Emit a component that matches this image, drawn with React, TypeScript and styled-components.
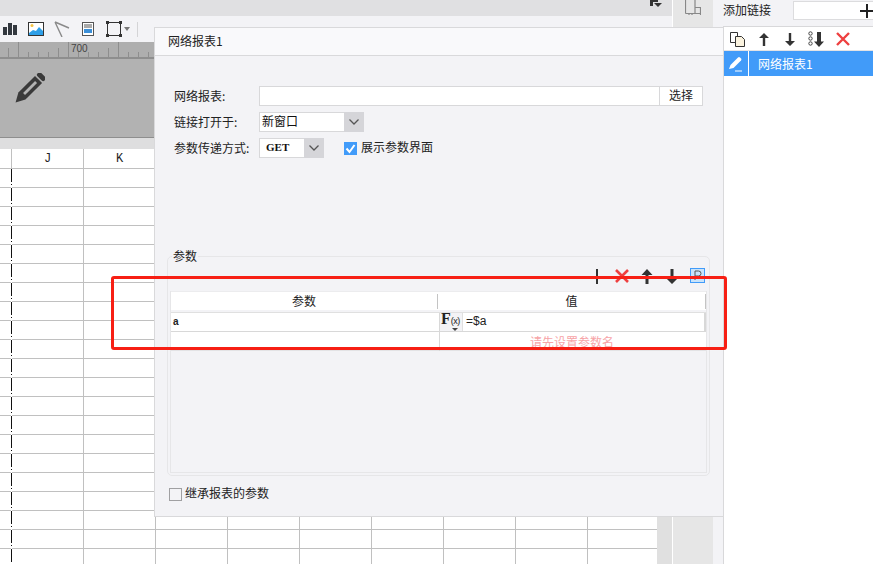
import React from "react";
import styled, { createGlobalStyle } from "styled-components";

const Global = createGlobalStyle`
  html, body { margin: 0; padding: 0; background: #fff; }
  * { box-sizing: border-box; }
  body { font-family: "Noto Sans CJK SC", "Liberation Sans", sans-serif; font-size: 12px; color: #222; }
`;

const Shell = styled.div`
  position: relative; width: 873px; height: 564px; overflow: hidden; display: flex; background: #fff;
`;
const MainColumn = styled.div`width: 657px; display: flex; flex-direction: column; flex: none; z-index: 1;`;
const TopBar = styled.div`
  height: 16px; background: #e0e0e2; display: flex; justify-content: flex-end; flex: none;
`;
const TopIcon = styled.svg`margin-right: -5px; display: block; flex: none;`;
const Toolbar = styled.div`height: 26px; background: #f3f3f6; flex: none; display: flex; align-items: center; padding-left: 3px;`;
const ToolIcon = styled.svg<{ $gap?: number }>`flex: none; margin-right: ${p => p.$gap ?? 0}px; display: block;`;
const ToolSep = styled.div`width: 1px; height: 15px; background: #d4d4d6; margin-left: 7px;`;
const Ruler = styled.div`height: 17px; background: #aeaeae; border-bottom: 2px solid #8e8e8e; flex: none; overflow: hidden;`;
const RulerSvg = styled.svg`display: block;`;
const RulerLabel = styled.text`font-family: "Liberation Sans", sans-serif; font-size: 10px; fill: #444;`;
const Stage = styled.div`height: 79px; background: #b2b2b2; border-bottom: 1px solid #8e8e8e; padding: 14px 13px; flex: none;`;
const Strip = styled.div`height: 11px; background: #dededf; flex: none;`;
const Sheet = styled.div`flex: 1; overflow: hidden; background: #fff;`;
const SheetRow = styled.div<{ $head?: boolean }>`display: flex; height: ${p => (p.$head ? 20 : 19)}px; border-bottom: 1px solid #c0c0c0;`;
const SheetLead = styled.div`width: 12px; flex: none; border-right: 1px solid #c0c0c0;`;
const SheetLeadDashed = styled.div`
  width: 12px; flex: none; margin-bottom: -1px;
  background: repeating-linear-gradient(#111 0 13px, #fff 13px 15px, #111 15px 16px, #fff 16px 19px) right / 1px 100% no-repeat;
`;
const SheetCell = styled.div<{ $last?: boolean }>`
  width: ${p => (p.$last ? 69 : 72)}px; flex: none; border-right: ${p => (p.$last ? "none" : "1px solid #c0c0c0")};
  text-align: center; line-height: 20px; font-family: "Liberation Mono", monospace; font-size: 12px; color: #222;
`;
const RailA = styled.div`width: 16px; background: #e0e0e0; border-right: 1px solid #fff; flex: none; display: flex; flex-direction: column;`;
const RailCapTop = styled.div`height: 16px; background: #e0e0e2;`;
const RailCapLow = styled.div`height: 11px; background: #f3f3f6;`;
const RailB = styled.div`width: 40px; background: #e6e6e6; flex: none; display: flex; justify-content: center; align-items: flex-start;`;
const RailC = styled.div`width: 10px; background: #f3f3f6; flex: none;`;

const RightPanel = styled.div`flex: 1; display: flex; flex-direction: column;`;
const RightHead = styled.div`height: 27px; background: #f3f3f6; display: flex; align-items: flex-start; padding: 1px 0 0 0; border-bottom: 1px solid #d8d8da;`;
const RightTitle = styled.div`width: 70px; height: 18px; line-height: 17px; color: #222;`;
const RightInput = styled.div`
  width: 80px; height: 19px; background: #fff; border: 1px solid #dcdcde; border-right: none;
  display: flex; align-items: center; justify-content: flex-end;
`;
const PlusIcon = styled.svg`margin-right: -1px; display: block;`;
const RightBody = styled.div`flex: 1; background: #fff; border-left: 1px solid #d8d8da; display: flex; flex-direction: column;`;
const RightTools = styled.div`height: 24px; display: flex; align-items: center; padding-left: 6px; gap: 10px; border-bottom: 1px solid #e3e3e5;`;
const LinkRow = styled.div`height: 25px; background: #419bf9; display: flex; align-items: center; color: #fff;`;
const LinkEdit = styled.div`width: 25px; height: 25px; border-right: 1px solid #fff; display: flex; align-items: center; justify-content: center; flex: none;`;
const LinkName = styled.div`margin-left: 9px; color: #fff; padding-bottom: 1px;`;

const Dialog = styled.div`
  position: absolute; z-index: 2; left: 154px; top: 27px; width: 570px; height: 490px;
  background: #f3f3f6; border: 1px solid #d9d9db; display: flex; flex-direction: column;
`;
const DialogTitle = styled.div`height: 28px; flex: none; background: #f9f9fb; border-bottom: 1px solid #d9d9db; padding-left: 13px; line-height: 26px; color: #222;`;
const FormArea = styled.div`padding: 30px 0 0 19px; display: flex; flex-direction: column; gap: 6px; flex: none;`;
const FormRow = styled.div`display: flex; align-items: center; height: 20px;`;
const FieldLabel = styled.div`width: 85px; flex: none; color: #222; padding-bottom: 2px;`;
const TextBox = styled.div`width: 401px; height: 20px; background: #fff; border: 1px solid #d8d8da; flex: none;`;
const PickButton = styled.div`width: 43px; height: 20px; background: #fff; border: 1px solid #d8d8da; border-left: none; text-align: center; line-height: 16px; color: #222; flex: none;`;
const Select = styled.div<{ $w: number }>`
  width: ${p => p.$w}px; height: 20px; display: flex; flex: none; background: #fff; border: 1px solid #d8d8da; border-right: none;
  align-items: stretch;
`;
const SelectValue = styled.div<{ $mono?: boolean }>`
  flex: 1; padding-left: ${p => (p.$mono ? 6 : 2)}px; line-height: ${p => (p.$mono ? 17 : 16)}px; color: #111;
  font-family: ${p => (p.$mono ? '"Liberation Serif", serif' : "inherit")};
  font-weight: ${p => (p.$mono ? 700 : 400)};
  font-size: ${p => (p.$mono ? 11 : 12)}px;
`;
const SelectArrow = styled.div`width: 20px; background: #d5d5d9; display: flex; align-items: center; justify-content: center; flex: none; margin: -1px 0;`;
const CheckRow = styled.div<{ $ml?: number }>`display: flex; align-items: center; margin-left: ${p => p.$ml ?? 0}px; gap: 4px; color: #222; line-height: 14px;`;
const CheckText = styled.span`display: block; margin-top: -3px;`;
const CheckOn = styled.div`width: 13px; height: 13px; background: #419bf9; display: flex; align-items: center; justify-content: center; flex: none;`;
const CheckOff = styled.div`width: 13px; height: 13px; background: #f3f3f6; border: 1px solid #a0a0a2; flex: none;`;

const Group = styled.fieldset`
  margin: 90px 13px 0 12px; padding: 0 2px 2px; height: 228px; border: 1px solid #e6e6e8; border-radius: 5px; min-width: 0; flex: none;
`;
const GroupLegend = styled.legend`margin-left: 2px; padding: 0 1px; line-height: 16px; height: 16px; color: #222; font-size: 12px;`;
const GroupTools = styled.div`height: 27px; display: flex; justify-content: flex-end; align-items: flex-start; gap: 9px; padding: 4px 2px 0 0;`;
const ParamIcon = styled.svg`display: block; margin-left: 1px; flex: none;`;
const ParamBox = styled.div`height: 182px; background: #f3f3f6; border: 1px solid #e6e6e8; border-top: none;`;
const HeadRow = styled.div`display: grid; grid-template-columns: 267px 1fr; height: 19px; background: #fff; margin-bottom: 2px; border-top: 1px solid #ececee;`;
const HeadCell = styled.div`
  text-align: center; color: #222; border-right: 1px solid #c4c4c4; margin: 2px 0; height: 15px; line-height: 13px;
`;
const DataRow = styled.div`display: grid; grid-template-columns: 268px 1fr; height: 20px; background: #fff; border-top: 1px solid #e0e0e0; border-bottom: 1px solid #d8d8d8;`;
const DataCell = styled.div`font-family: "Liberation Sans", sans-serif; font-size: 10px; line-height: 18px; padding-left: 2px; color: #222; font-weight: 700;`;
const ValueCell = styled.div`display: flex; border-left: 1px solid #d8d8d8;`;
const FxButton = styled.div`width: 22px; background: #f3f3f6; position: relative; flex: none; font-family: "Liberation Serif", serif; color: #222; font-weight: 700; font-size: 16px; line-height: 12px; padding-left: 1px;`;
const FxSmall = styled.span`font-family: "Liberation Sans", sans-serif; font-size: 9px; font-weight: 400; letter-spacing: -0.5px;`;
const FxCaret = styled.div`position: absolute; right: 4px; bottom: 0; width: 0; height: 0; border: 3px solid transparent; border-top: 3px solid #444; border-bottom: 0;`;
const ValueInput = styled.div`flex: 1; line-height: 17px; font-family: "Liberation Sans", sans-serif; font-size: 12px; padding-left: 3px; color: #222; border-left: 1px solid #e0e0e0; border-right: 2px solid #d8d8d8;`;
const HintRow = styled.div`display: grid; grid-template-columns: 268px 1fr; height: 19px; background: #fff; border-bottom: 1px solid #e3e3e5;`;
const HintCell = styled.div`border-left: 1px solid #d8d8d8; text-align: center; color: #f7a4a7; line-height: 19px; padding-right: 2px;`;
const InheritRow = styled(CheckRow)`margin: 11px 0 0 14px; height: 14px; gap: 3px;`;

const RedFrame = styled.div`
  position: absolute; z-index: 3; left: 111px; top: 276px; width: 616px; height: 74px;
  border: 3px solid #f71f14; border-radius: 3px; pointer-events: none;
`;

const rows = Array.from({ length: 21 });
const cols = Array.from({ length: 9 });

const Caret = () => (
  <svg width="12" height="8" viewBox="0 0 12 8"><path d="M1.500 1.500 6 6l4.500-4.500" fill="none" stroke="#555" strokeWidth="1.300" /></svg>
);

const rulerTicks = Array.from({ length: 66 }, (_, i) => i * 10 + 8.5);

export default function App() {
  return (
    <Shell>
      <Global />
      <MainColumn>
        <TopBar>
          <TopIcon width="12" height="16" viewBox="0 0 12 16">
            <path d="M0 0h3v6H0zM3 0h5v2H3zM4 3h8L8 7z" fill="#333" />
          </TopIcon>
        </TopBar>
        <Toolbar>
          <ToolIcon width="14" height="14" viewBox="0 0 14 14" $gap={11}>
            <path d="M0 5h4v8H0zM5 1h4v12H5zM10 3h4v10h-4z" fill="#33383f" />
          </ToolIcon>
          <ToolIcon width="16" height="14" viewBox="0 0 16 14" $gap={10}>
            <rect x=".5" y=".5" width="15" height="13" fill="#fff" stroke="#333" />
            <circle cx="4" cy="3.500" r="1.500" fill="#f5c242" />
            <path d="M1 13V11l4-3 3 1 3-4 4 4v4z" fill="#2e9fe8" />
          </ToolIcon>
          <ToolIcon width="16" height="16" viewBox="0 0 16 16" $gap={12}>
            <path d="M1 1l14 6M1 1l7 15" stroke="#8a8a8a" strokeWidth="1.400" fill="none" />
          </ToolIcon>
          <ToolIcon width="12" height="14" viewBox="0 0 12 14" $gap={12}>
            <rect x=".5" y=".5" width="11" height="13" fill="#fff" stroke="#555" />
            <path d="M2 3h8M2 5h8" stroke="#555" />
            <path d="M2 7h8v4H2z" fill="#3b8fd8" />
          </ToolIcon>
          <ToolIcon width="16" height="16" viewBox="0 0 16 16" $gap={2}>
            <rect x="1.500" y="1.500" width="13" height="13" fill="#f3f3f6" stroke="#333" />
            <path d="M0 0h3v3H0zM13 0h3v3h-3zM0 13h3v3H0zM13 13h3v3h-3z" fill="#333" />
          </ToolIcon>
          <ToolIcon width="6" height="4" viewBox="0 0 6 4"><path d="M0 0h6L3 4z" fill="#777" /></ToolIcon>
          <ToolSep />
        </Toolbar>
        <Ruler>
          <RulerSvg width="657" height="15" viewBox="0 0 657 15">
            {rulerTicks.map((x, i) => (
              <path key={i} d={`M${x} ${i % 5 === 1 ? 0 : i % 5 === 0 ? 6 : 10}V15`} stroke="#8e8e8e" />
            ))}
            <RulerLabel x="71" y="10">700</RulerLabel>
          </RulerSvg>
        </Ruler>
        <Stage>
          <svg width="32" height="32" viewBox="0 0 32 32">
            <g transform="rotate(45 16 16)" fill="#3a3a3a">
              <rect x="11" y="-4" width="10" height="5" rx="2" />
              <path d="M11 2.500h10V26l-5 9-5-9z" />
              <path d="M14.600 6h2.800v17h-2.800z" fill="#b2b2b2" />
            </g>
          </svg>
        </Stage>
        <Strip />
        <Sheet>
          <SheetRow $head>
            <SheetLead />
            {cols.map((_, c) => (
              <SheetCell key={c} $last={c === 8}>{c === 0 ? "J" : c === 1 ? "K" : ""}</SheetCell>
            ))}
          </SheetRow>
          {rows.map((_, r) => (
            <SheetRow key={r}>
              <SheetLeadDashed />
              {cols.map((_, c) => (
                <SheetCell key={c} $last={c === 8} />
              ))}
            </SheetRow>
          ))}
        </Sheet>
      </MainColumn>
      <RailA><RailCapTop /><RailCapLow /></RailA>
      <RailB>
        <svg width="16" height="15" viewBox="0 0 16 15">
          <path d="M.5 0v13.500M.5 13.500H16M10 0v13.500M10 7.500h6M4 13.500V15M7 13.500V15M15.500 7.500V15" fill="none" stroke="#888" strokeWidth="1.200" />
        </svg>
      </RailB>
      <RailC />
      <RightPanel>
        <RightHead>
          <RightTitle>添加链接</RightTitle>
          <RightInput>
            <PlusIcon width="14" height="14" viewBox="0 0 14 14">
              <path d="M7 0v14M0 7h14" stroke="#222" strokeWidth="2" />
            </PlusIcon>
          </RightInput>
        </RightHead>
        <RightBody>
          <RightTools>
            <svg width="16" height="16" viewBox="0 0 16 16">
              <path d="M.5 1.500h7v10h-7z" fill="#fff" stroke="#333" />
              <path d="M5.500 5.500h6l3 3v7h-9z" fill="#fbf3df" stroke="#333" />
            </svg>
            <svg width="16" height="16" viewBox="0 0 16 16"><path d="M8 2 3 7h3.800v8h2.400V7H13z" fill="#333" /></svg>
            <svg width="16" height="16" viewBox="0 0 16 16"><path d="M8 15 3 10h3.800V2h2.400v8H13z" fill="#333" /></svg>
            <svg width="17" height="16" viewBox="0 0 17 16">
              <circle cx="2.500" cy="2.500" r="1.700" fill="none" stroke="#444" />
              <circle cx="2.500" cy="7.500" r="1.700" fill="none" stroke="#444" />
              <circle cx="2.500" cy="12.500" r="1.700" fill="none" stroke="#444" />
              <path d="M11 16 6 10.500h3V1h4v9.500h3z" fill="#333" />
            </svg>
            <svg width="16" height="16" viewBox="0 0 16 16"><path d="M2 2l12 12M14 2 2 14" stroke="#ee4040" strokeWidth="2.400" /></svg>
          </RightTools>
          <LinkRow>
            <LinkEdit>
              <svg width="16" height="16" viewBox="0 0 16 16">
                <path d="M1 13l1.500-4L10 1.500a1.500 1.500 0 0 1 2 0l1 1a1.500 1.500 0 0 1 0 2L5.500 12z" fill="#fff" />
                <path d="M7 15h7" stroke="#fff" />
              </svg>
            </LinkEdit>
            <LinkName>网络报表1</LinkName>
          </LinkRow>
        </RightBody>
      </RightPanel>

      <Dialog>
        <DialogTitle>网络报表1</DialogTitle>
        <FormArea>
          <FormRow>
            <FieldLabel>网络报表:</FieldLabel>
            <TextBox />
            <PickButton>选择</PickButton>
          </FormRow>
          <FormRow>
            <FieldLabel>链接打开于:</FieldLabel>
            <Select $w={105}>
              <SelectValue>新窗口</SelectValue>
              <SelectArrow><Caret /></SelectArrow>
            </Select>
          </FormRow>
          <FormRow>
            <FieldLabel>参数传递方式:</FieldLabel>
            <Select $w={65}>
              <SelectValue $mono>GET</SelectValue>
              <SelectArrow><Caret /></SelectArrow>
            </Select>
            <CheckRow $ml={20}>
              <CheckOn>
                <svg width="11" height="11" viewBox="0 0 11 11"><path d="M1.500 5.500 4.500 9 9.500 2" fill="none" stroke="#fff" strokeWidth="2" /></svg>
              </CheckOn>
              <CheckText>展示参数界面</CheckText>
            </CheckRow>
          </FormRow>
        </FormArea>
        <Group>
          <GroupLegend>参数</GroupLegend>
          <GroupTools>
            <svg width="16" height="16" viewBox="0 0 16 16"><path d="M8 1v16M0 10h16" stroke="#333" strokeWidth="2" /></svg>
            <svg width="16" height="16" viewBox="0 0 16 16"><path d="M2 2l12 12M14 2 2 14" stroke="#ee4040" strokeWidth="2.600" /></svg>
            <svg width="16" height="16" viewBox="0 0 16 16"><path d="M8 1 2.500 7h4v9h3V7h4z" fill="#333" /></svg>
            <svg width="16" height="16" viewBox="0 0 16 16"><path d="M8 16 2.500 10.500h4V1h3v9.500h4z" fill="#333" /></svg>
            <ParamIcon width="15" height="15" viewBox="0 0 15 15">
              <rect x=".5" y=".5" width="14" height="14" fill="#c9e3fa" stroke="#419bf9" />
              <path d="M5 12V3h3.500a2.500 2.500 0 0 1 0 5H5" fill="none" stroke="#555" />
            </ParamIcon>
          </GroupTools>
          <ParamBox>
            <HeadRow>
              <HeadCell>参数</HeadCell>
              <HeadCell>值</HeadCell>
            </HeadRow>
            <DataRow>
              <DataCell>a</DataCell>
              <ValueCell>
                <FxButton>F<FxSmall>(x)</FxSmall><FxCaret /></FxButton>
                <ValueInput>=$a</ValueInput>
              </ValueCell>
            </DataRow>
            <HintRow>
              <div />
              <HintCell>请先设置参数名</HintCell>
            </HintRow>
          </ParamBox>
        </Group>
        <InheritRow>
          <CheckOff />
          <CheckText>继承报表的参数</CheckText>
        </InheritRow>
      </Dialog>
      <RedFrame />
    </Shell>
  );
}
